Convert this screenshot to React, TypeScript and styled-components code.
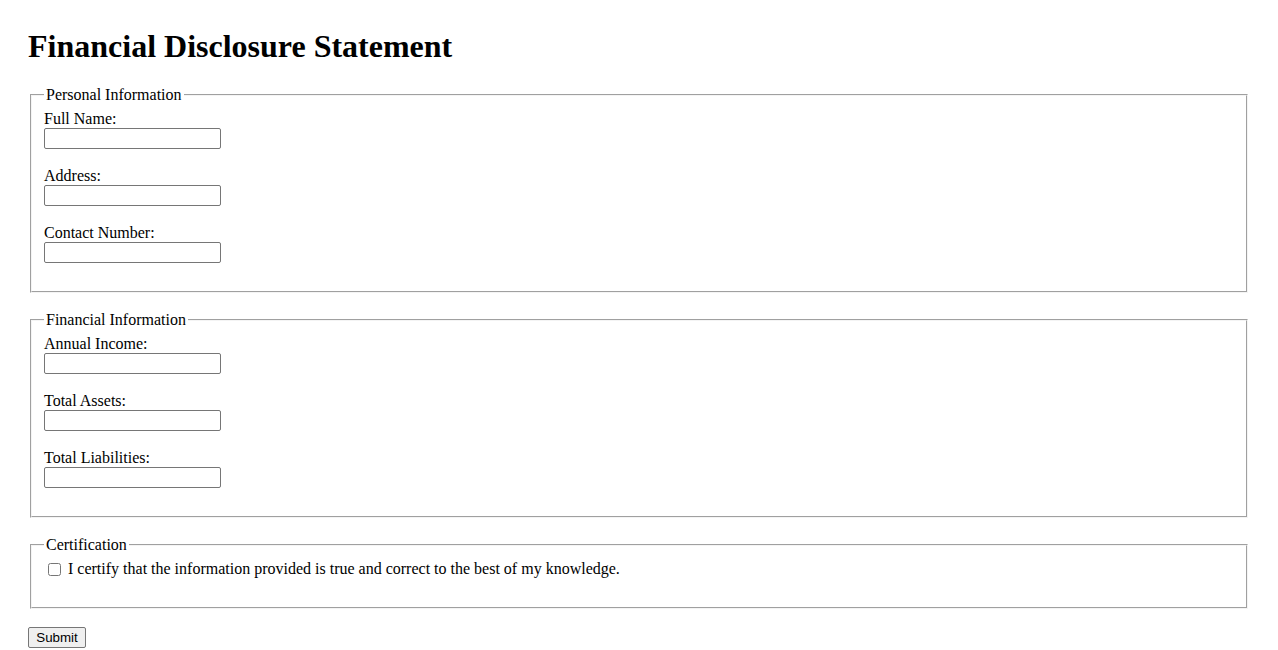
import styled, { createGlobalStyle } from "styled-components";

const GlobalStyle = createGlobalStyle`
  body {
    margin: 28px;
    font-family: "Liberation Serif", "Times New Roman", serif;
    font-size: 16px;
    color: #000;
    background: #fff;
  }
`;

const Title = styled.h1`
  font-size: 32px;
  font-weight: bold;
  margin: 0 0 21px;
  line-height: 37px;
`;

const Section = styled.fieldset`
  margin: 0 2px 18.5px;
  padding: 5.6px 12px 10px;
  border: 2px groove rgb(244, 244, 244);
  min-width: 0;
`;

const Legend = styled.legend`
  padding: 0 2px;
  line-height: 18px;
`;

const Field = styled.div`
  margin-bottom: 18px;
`;

const Label = styled.label`
  display: block;
  line-height: 18px;
`;

const TextInput = styled.input`
  display: block;
  box-sizing: border-box;
  width: 177px;
  height: 21px;
  margin: 0;
  padding: 1px 2px;
  border: 1px solid #767676;
  border-radius: 2px;
  font-family: "Liberation Sans", Arial, sans-serif;
  font-size: 13.33px;
`;

const CheckRow = styled.div`
  display: flex;
  align-items: center;
  gap: 7px;
  margin-bottom: 18.5px;
  line-height: 18px;
  padding-top: 0.5px;
`;

const Check = styled.input`
  width: 13px;
  height: 13px;
  margin: 0 0 0 4px;
`;

const SubmitButton = styled.button`
  box-sizing: border-box;
  width: 58px;
  height: 21px;
  font-family: "Liberation Sans", Arial, sans-serif;
  font-size: 13.33px;
  padding: 1px 6px;
  border: 1px solid #767676;
  border-radius: 2px;
  background: #efefef;
  color: #000;
`;

const sections = [
  {
    title: "Personal Information",
    fields: [
      { id: "fullName", label: "Full Name:" },
      { id: "address", label: "Address:" },
      { id: "contact", label: "Contact Number:" },
    ],
  },
  {
    title: "Financial Information",
    fields: [
      { id: "income", label: "Annual Income:" },
      { id: "assets", label: "Total Assets:" },
      { id: "liabilities", label: "Total Liabilities:" },
    ],
  },
];

const App = () => {
  return (
    <>
      <GlobalStyle />
      <Title>Financial Disclosure Statement</Title>
      <form onSubmit={(e) => e.preventDefault()}>
        {sections.map((s) => (
          <Section key={s.title}>
            <Legend>{s.title}</Legend>
            {s.fields.map((f) => (
              <Field key={f.id}>
                <Label htmlFor={f.id}>{f.label}</Label>
                <TextInput type="text" id={f.id} />
              </Field>
            ))}
          </Section>
        ))}
        <Section>
          <Legend>Certification</Legend>
          <CheckRow>
            <Check type="checkbox" id="certify" />
            <label htmlFor="certify">
              I certify that the information provided is true and correct to the best of my knowledge.
            </label>
          </CheckRow>
        </Section>
        <SubmitButton type="submit">Submit</SubmitButton>
      </form>
    </>
  );
};

export default App;
